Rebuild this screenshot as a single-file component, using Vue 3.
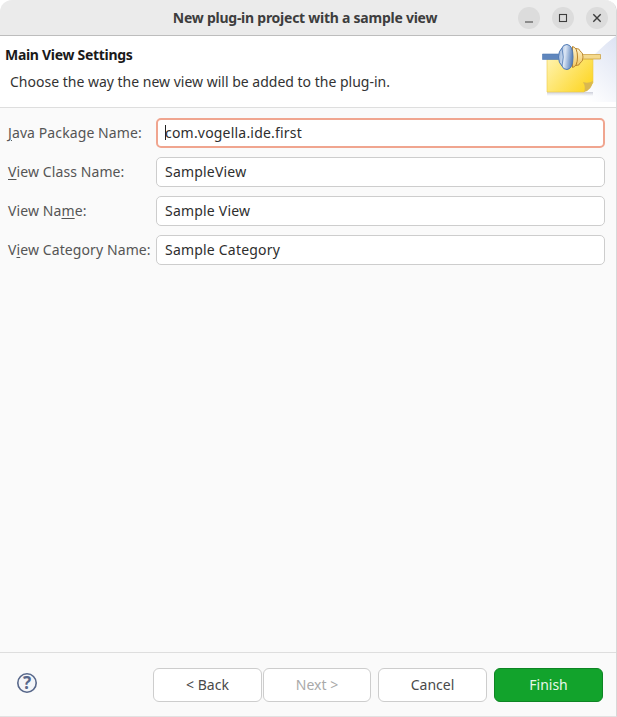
<template>
  <div class="dialog">
    <header class="titlebar">
      <span class="title">New plug-in project with a sample view</span>
      <div class="win-buttons">
        <button class="win-btn" aria-label="Minimize">
          <svg width="16" height="16" viewBox="0 0 16 16"><path d="M4 12h8" stroke="#3d3d3d" stroke-width="1.2" fill="none" /></svg>
        </button>
        <button class="win-btn" aria-label="Maximize">
          <svg width="16" height="16" viewBox="0 0 16 16"><rect x="4.5" y="4.5" width="7" height="7" stroke="#3d3d3d" stroke-width="1.1" fill="none" /></svg>
        </button>
        <button class="win-btn" aria-label="Close">
          <svg width="16" height="16" viewBox="0 0 16 16"><path d="M4.3 4.3l7.4 7.4M11.7 4.3l-7.4 7.4" stroke="#3d3d3d" stroke-width="1.4" fill="none" /></svg>
        </button>
      </div>
    </header>

    <section class="banner">
      <div class="banner-text">
        <h1 class="banner-title">Main View Settings</h1>
        <p class="banner-desc">Choose the way the new view will be added to the plug-in.</p>
      </div>
      <svg class="banner-art" width="75" height="66" viewBox="0 0 75 66">
        <defs>
          <linearGradient id="wash" x1="0" y1="1" x2="1" y2="0">
            <stop offset="0.3" stop-color="#ffffff" />
            <stop offset="1" stop-color="#dde3f3" />
          </linearGradient>
          <linearGradient id="note" x1="0" y1="0" x2="1" y2="0.6">
            <stop offset="0" stop-color="#fff3ae" />
            <stop offset="1" stop-color="#fdd82e" />
          </linearGradient>
          <linearGradient id="blue" x1="0" y1="0" x2="1" y2="0.2">
            <stop offset="0" stop-color="#8fadd6" />
            <stop offset="0.5" stop-color="#dbe6f5" />
            <stop offset="1" stop-color="#5f86bd" />
          </linearGradient>
          <linearGradient id="gold" x1="0" y1="0" x2="0" y2="1">
            <stop offset="0" stop-color="#fff3cc" />
            <stop offset="1" stop-color="#f2c860" />
          </linearGradient>
          <linearGradient id="shade" x1="0" y1="0" x2="0" y2="1">
            <stop offset="0" stop-color="#b9bccb" stop-opacity="0.7" />
            <stop offset="1" stop-color="#b9bccb" stop-opacity="0" />
          </linearGradient>
        </defs>
        <path d="M75 0V66H6C26 50 50 18 75 0Z" fill="url(#wash)" />
        <path d="M6 56H52V60H6Z" fill="url(#shade)" />
        <path d="M6 23H52V47L43 56H6Z" fill="url(#note)" stroke="#ecc94a" stroke-width="0.6" />
        <path d="M43 56Q51 54 52 45Q47 48 42 46Q45 51 43 56Z" fill="#d9b850" />
        <path d="M1.5 18H18V23.5H1.5Z" fill="#5f86bd" stroke="#4f79b4" stroke-width="0.6" />
        <path d="M41 18.5H59.5V23H41Z" fill="#f4d98c" stroke="#c99b38" stroke-width="0.7" />
        <path d="M35 12.5Q39 12.5 39 15Q42 16 42 21Q42 26 39 27Q39 29.5 35 29.5Z" fill="url(#gold)" stroke="#b9832a" stroke-width="0.9" />
        <path d="M31.5 10.5Q36.5 11.5 36.5 21Q36.5 30.5 31.5 31.5Z" fill="url(#gold)" stroke="#b9832a" stroke-width="1" />
        <path d="M26 8.5Q32 9 32 21Q32 33 26 33.5Q22 33.5 21 30Q17.5 27 17.5 21Q17.5 15 21 12Q22 8.5 26 8.5Z" fill="url(#blue)" stroke="#4f79b4" stroke-width="1" />
        <path d="M21 12Q23.5 21 21 30" fill="none" stroke="#4f79b4" stroke-width="0.8" />
      </svg>
    </section>

    <main class="form">
      <div class="field" v-for="(field, idx) in fields" :key="field.label">
        <label class="field-label">
          {{ field.before }}<u>{{ field.key }}</u>{{ field.after }}
        </label>
        <div class="input" :class="{ focused: idx === 0 }">
          <span v-if="idx === 0" class="caret"></span>{{ field.value }}
        </div>
      </div>
    </main>

    <footer class="footer">
      <svg class="help" width="22" height="22" viewBox="0 0 22 22">
        <circle cx="11" cy="11" r="9.2" fill="#f4f5f8" stroke="#57678a" stroke-width="1.6" />
        <text x="11" y="16.5" text-anchor="middle" class="help-mark">?</text>
      </svg>
      <div class="actions">
        <div class="nav-group">
          <button class="btn">&lt; Back</button>
          <button class="btn next" disabled>Next &gt;</button>
        </div>
        <button class="btn">Cancel</button>
        <button class="btn primary">Finish</button>
      </div>
    </footer>
  </div>
</template>

<script setup>
const fields = [
  { before: '', key: 'J', after: 'ava Package Name:', value: 'com.vogella.ide.first' },
  { before: '', key: 'V', after: 'iew Class Name:', value: 'SampleView' },
  { before: 'View Na', key: 'm', after: 'e:', value: 'Sample View' },
  { before: 'V', key: 'i', after: 'ew Category Name:', value: 'Sample Category' }
]
</script>

<style>
html,
body {
  margin: 0;
  background: #ffffff;
}
</style>

<style scoped>
.dialog {
  width: 617px;
  height: 717px;
  display: flex;
  flex-direction: column;
  background: #fafafa;
  border-radius: 12px 12px 0 0;
  border-right: 1px solid #d8d8d8;
  border-bottom: 1px solid #e2e2e2;
  box-sizing: border-box;
  overflow: hidden;
  font-family: "Noto Sans", "Open Sans", sans-serif;
  color: #3d3d3d;
}

.titlebar {
  height: 36px;
  flex-shrink: 0;
  position: relative;
  display: flex;
  align-items: center;
  justify-content: flex-end;
  padding-right: 8px;
  background: #ebebeb;
  border-bottom: 1px solid #bdbdbd;
  box-sizing: border-box;
}

.title {
  position: absolute;
  left: 0;
  right: 6px;
  text-align: center;
  font-size: 14px;
  font-weight: 700;
  color: #3d3d3d;
  letter-spacing: -0.25px;
}

.win-buttons {
  display: flex;
  gap: 12px;
}

.win-btn {
  width: 22px;
  height: 22px;
  padding: 0;
  border: none;
  border-radius: 50%;
  background: #dcdcdc;
  display: flex;
  align-items: center;
  justify-content: center;
}

.banner {
  height: 72px;
  flex-shrink: 0;
  display: flex;
  justify-content: space-between;
  background: #ffffff;
  border-bottom: 1px solid #dedede;
  box-sizing: border-box;
}

.banner-text {
  padding: 9px 0 0 5px;
}

.banner-title {
  margin: 0;
  font-size: 14px;
  line-height: 19px;
  font-weight: 700;
  color: #1a1a1a;
  letter-spacing: -0.3px;
}

.banner-desc {
  margin: 8px 0 0 5px;
  font-size: 14px;
  line-height: 19px;
  color: #333333;
}

.banner-art {
  flex-shrink: 0;
}

.form {
  flex: 1;
  display: flex;
  flex-direction: column;
  gap: 9px;
  padding: 10px 11px 0 8px;
}

.field {
  display: flex;
  align-items: center;
}

.field-label {
  width: 148px;
  flex-shrink: 0;
  padding-bottom: 2px;
  font-size: 14px;
  color: #555555;
  letter-spacing: 0.1px;
  white-space: nowrap;
  text-underline-offset: 2px;
}

.input {
  flex: 1;
  height: 30px;
  padding: 0 8px 2px;
  display: flex;
  align-items: center;
  background: #ffffff;
  border: 1px solid #cdcdcd;
  border-radius: 5px;
  box-sizing: border-box;
  font-size: 14px;
  letter-spacing: 0.2px;
  color: #2e2e2e;
}

.input.focused {
  border: 2px solid #f0a58f;
  padding: 0 7px 2px;
}

.caret {
  width: 1px;
  height: 15px;
  margin-right: -1px;
  background: #222222;
}

.footer {
  height: 64px;
  flex-shrink: 0;
  display: flex;
  align-items: flex-start;
  justify-content: space-between;
  padding: 15px 13px 0 16px;
  border-top: 1px solid #dedede;
  box-sizing: border-box;
}

.help {
  margin-top: 4px;
}

.help-mark {
  font-size: 17px;
  font-weight: 700;
  fill: #57678a;
}

.actions {
  display: flex;
  gap: 7px;
}

.nav-group {
  display: flex;
  gap: 1px;
}

.btn {
  width: 109px;
  height: 34px;
  padding: 0 0 2px;
  background: #ffffff;
  border: 1px solid #cdcdcd;
  border-radius: 6px;
  box-sizing: border-box;
  font-family: inherit;
  font-size: 14px;
  color: #4a4a4a;
}

.btn.next {
  width: 108px;
}

.btn:disabled {
  color: #a9a9a9;
}

.btn.primary {
  background: #12a32c;
  border-color: #0e8524;
  color: #e8f7ea;
}
</style>
